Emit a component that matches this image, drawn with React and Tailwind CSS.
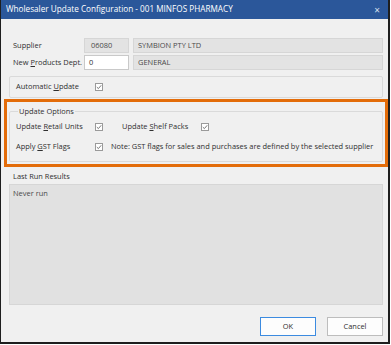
import React from 'react';

const font = { fontFamily: '"Open Sans", "Noto Sans", Arial, sans-serif' };

const Check = () => (
    <span className="inline-flex items-center justify-center w-[8px] h-[8px] border border-[#9a9a9a] bg-white">
        <svg width="6" height="6" viewBox="0 0 6 6">
            <path d="M0.8 3.1 L2.4 4.6 L5.2 1.3" fill="none" stroke="#6a6a6a" strokeWidth="0.9" />
        </svg>
    </span>
);

const Field = ({ children, className = '' }) => (
    <div className={`h-[15px] border border-[#d6d6d6] bg-[#e3e3e3] flex items-center px-[4px] text-[#4a4a4a] ${className}`}>
        {children}
    </div>
);

const WholesalerDialog = () => {
    return (
        <div className="relative w-[391px] h-[345px] bg-white overflow-hidden" style={font}>
            <div className="w-[390px] h-[344px] flex flex-col border-l border-r-2 border-b-2 border-[#1e1e1e] bg-[#f0f0f0] text-[7.45px] text-[#2f2f2f]">
                {/* title bar */}
                <div className="h-[19px] shrink-0 bg-[#2b579a] text-white flex items-center justify-between pl-[5px] pr-[8px] text-[8.2px]">
                    <span>Wholesaler Update Configuration - 001 MINFOS PHARMACY</span>
                    <span className="text-[10px] text-[#d8e0ee] leading-none">×</span>
                </div>

                <div className="flex flex-col pl-[8px] pr-[5px] pt-[19px]">
                    {/* supplier */}
                    <div className="flex items-center h-[15px]">
                        <span className="w-[75px] pl-[4px]">Supplier</span>
                        <Field className="w-[45px] pl-[6px]">06080</Field>
                        <Field className="flex-1 ml-[4px]">SYMBION PTY LTD</Field>
                    </div>
                    <div className="flex items-center h-[15px] mt-[2px]">
                        <span className="w-[75px] pl-[4px]">New <u>P</u>roducts Dept.</span>
                        <div className="w-[45px] h-[15px] border border-[#c9c9c9] bg-white flex items-center pl-[4px]">0</div>
                        <Field className="flex-1 ml-[4px]">GENERAL</Field>
                    </div>

                    {/* automatic update */}
                    <div className="mt-[6px] h-[22px] border border-[#dadada] rounded-[2px] flex items-center pl-[6px]">
                        <span className="w-[79px]">Automatic <u>U</u>pdate</span>
                        <Check />
                    </div>

                    {/* update options */}
                    <fieldset className="mt-[8px] border border-[#dadada] rounded-[2px] pl-[6px] pb-[9px]">
                        <legend className="ml-[2px] px-[1px] leading-[10px]">Update Options</legend>
                        <div className="flex items-center mt-[6px] h-[10px]">
                            <span className="w-[79px]">Update <u>R</u>etail Units</span>
                            <Check />
                            <span className="ml-[19px] w-[79px]">Update <u>S</u>helf Packs</span>
                            <Check />
                        </div>
                        <div className="flex items-center mt-[10px] h-[10px]">
                            <span className="w-[79px]">Apply <u>G</u>ST Flags</span>
                            <Check />
                            <span className="ml-[8px]">Note: GST flags for sales and purchases are defined by the selected supplier</span>
                        </div>
                    </fieldset>

                    {/* last run */}
                    <span className="mt-[9px] pl-[4px] leading-[10px]">Last Run Results</span>
                    <div className="mt-[3px] h-[121px] border border-[#d6d6d6] bg-[#e1e1e1] pl-[3px] pt-[3px] text-[#4a4a4a] leading-[10px]">
                        Never run
                    </div>

                    {/* buttons */}
                    <div className="flex justify-end gap-[11px] mt-[12px]">
                        <button className="w-[56px] h-[19px] border border-[#3c8be0] bg-[#fdfdfd] text-[#2f2f2f]">OK</button>
                        <button className="w-[56px] h-[19px] border border-[#bdbdbd] bg-[#fdfdfd] text-[#2f2f2f]">Cancel</button>
                    </div>
                </div>
            </div>

            {/* orange highlight annotation */}
            <div className="absolute left-[4px] top-[99px] w-[384px] h-[68px] border-[3px] border-[#e36c09]" />
        </div>
    );
};

export default function App() {
    return <WholesalerDialog />;
}
